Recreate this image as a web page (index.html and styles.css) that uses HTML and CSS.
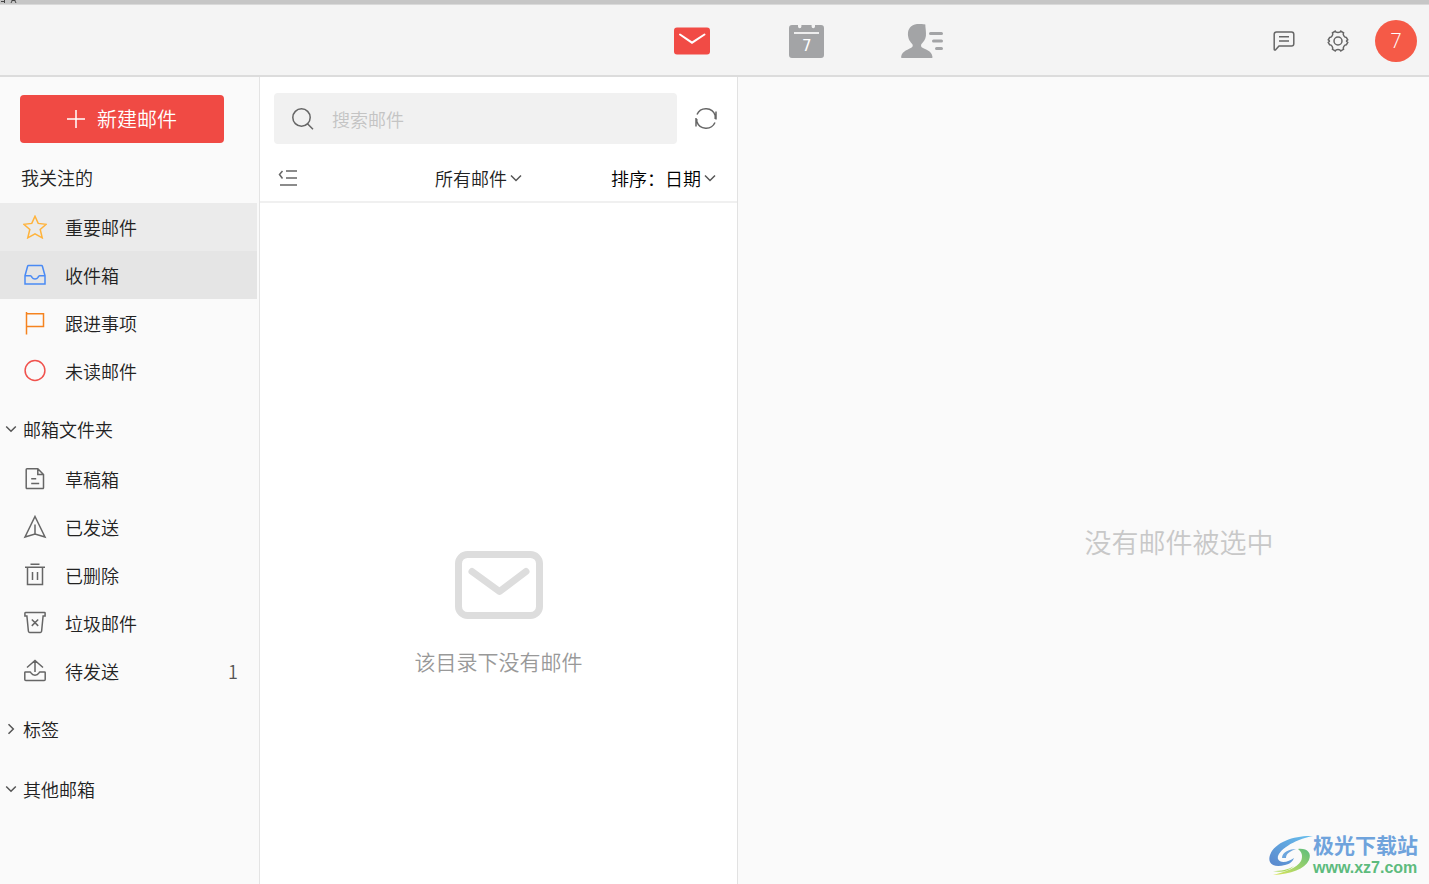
FILE: index.html
```html
<!DOCTYPE html>
<html lang="zh-CN">
<head>
<meta charset="utf-8">
<meta name="viewport" content="width=device-width, initial-scale=1">
<title>邮件</title>
<link rel="stylesheet" href="styles.css">
</head>
<body>
<div class="app">
  <div class="window-edge">
    <svg class="edge-marks" viewBox="0 0 20 3" aria-hidden="true"><path d="M1 1.500h3M4.500 0v3M11 3l1-2M15 1l1 2M11.500 .5h4"/></svg>
  </div>
  <header class="topbar">
    <nav class="modes" aria-label="主导航">
      <button class="mode" type="button" aria-label="邮件">
        <svg class="mode-mail" viewBox="0 0 36 28"><rect width="36" height="27" y=".5" rx="3" fill="#f14b45"/><path d="M6 7.500l12 8.200L30.500 7.500" fill="none" stroke="#fff" stroke-width="2" stroke-linecap="round"/></svg>
      </button>
      <button class="mode" type="button" aria-label="日历">
        <svg class="mode-calendar" viewBox="0 0 35 34"><path d="M3 1h6v1.500a1.700 1.700 0 0 0 3.400 0V1h10.200v1.500a1.700 1.700 0 0 0 3.400 0V1h6a3 3 0 0 1 3 3v27a3 3 0 0 1-3 3H3a3 3 0 0 1-3-3V4a3 3 0 0 1 3-3z" fill="#a3a4a6"/><path d="M5 9h25" stroke="#eee" stroke-width="2"/></svg>
        <span class="calendar-day">7</span>
      </button>
      <button class="mode" type="button" aria-label="联系人">
        <svg class="mode-contacts" viewBox="0 0 42 34"><path d="M16 0c3-.4 8 .2 8.500.8-.6 1.500.8 5 .4 11.200-.5 3.500-2.300 5.500-4.400 8-.7 1-.6 2.300.2 3.200C23.500 25.200 31 26.500 31.500 33c0 .7-.2 1-1 1H1c-.8 0-1-.4-.9-1 .8-6.500 8-7.500 10.900-9.800.9-.8 1-2.200.2-3.200C9.500 18 7.500 16 7 11.500 6.500 6 9 .8 16 0z" fill="#a3a4a6"/><path d="M29.500 9.500h11M32.500 17h8M35.500 24.500h5" stroke="#a3a4a6" stroke-width="3" stroke-linecap="round"/></svg>
      </button>
    </nav>
    <div class="actions">
      <button class="icon-button" type="button" aria-label="反馈">
        <svg class="line-icon" viewBox="0 0 22 22"><path d="M3.500 2h15a2.300 2.300 0 0 1 2.300 2.300v9.400a2.300 2.300 0 0 1-2.300 2.300H6L2.600 19.800c-.6.500-1.400.3-1.400-.6V4.300A2.300 2.300 0 0 1 3.500 2zM6 6.700h10M6 11h10"/></svg>
      </button>
      <button class="icon-button" type="button" aria-label="设置">
        <svg class="line-icon" viewBox="0 0 22 22"><path d="M8.200 1.200c.7 1.700 4.900 1.700 5.600 0l2.700 1.600c-1 1.800 1 4.900 2.900 4.800l1.300 2.200c-1.600 1-1.600 1.600 0 2.600l-1.300 2.400c-2-.1-3.800 2.600-2.900 4.500l-2.700 1.600c-.9-1.800-4.700-1.800-5.600 0l-2.700-1.600c.9-1.900-.9-4.600-2.900-4.500l-1.300-2.400c1.600-1 1.600-1.600 0-2.600l1.300-2.200c1.900.1 3.900-3 2.900-4.800z"/><circle cx="11" cy="11" r="4"/></svg>
      </button>
      <button class="avatar" type="button" aria-label="账户 7">7</button>
    </div>
  </header>

  <div class="workspace">
    <aside class="sidebar">
      <button class="compose" type="button">
        <svg class="compose-plus" viewBox="0 0 18 18" aria-hidden="true"><path d="M9 0v18M0 9h18"/></svg>
        新建邮件
      </button>
      <h2 class="group-title plain">我关注的</h2>
      <ul class="folders">
        <li><a class="folder hovered" href="#"><svg class="folder-icon star" viewBox="0 0 24 24"><path d="M12 1.300l3.200 7.100 8 .9-6 5.200 2 8.300L12 18.800l-7.200 4 2-8.300-6-5.200 8-.9z"/></svg>重要邮件</a></li>
        <li><a class="folder selected" href="#"><svg class="folder-icon inbox" viewBox="0 0 24 24"><path d="M5.500 2.500h13a1 1 0 0 1 .9.700l2.600 9.500v8.300H2v-8.300l2.600-9.500a1 1 0 0 1 .9-.7zM2 12.700h5.500c.8 0 1 .8 1.500 1.700 1.300 2.200 4.700 2.200 6 0 .5-.9.700-1.700 1.500-1.700H22"/></svg>收件箱</a></li>
        <li><a class="folder" href="#"><svg class="folder-icon flag" viewBox="0 0 24 24"><path d="M3.500 1v22.500M3.500 2.800h17v12.700h-17"/></svg>跟进事项</a></li>
        <li><a class="folder" href="#"><svg class="folder-icon unread" viewBox="0 0 24 24"><circle cx="12" cy="11.500" r="9.900"/></svg>未读邮件</a></li>
      </ul>

      <button class="group-title" type="button" aria-expanded="true"><svg class="chevron" viewBox="0 0 12 12"><path d="M1.200 3.500L6 8.300l4.800-4.800"/></svg>邮箱文件夹</button>
      <ul class="folders">
        <li><a class="folder" href="#"><svg class="folder-icon" viewBox="0 0 24 24"><path d="M4.500 1.800h10.300l5.700 5.700v13.300a.8.800 0 0 1-.8.800H4a.8.800 0 0 1-.8-.8V2.600a.8.800 0 0 1 .8-.8zM14.800 2v5.500h5.500M8.200 11.800h5M8.200 16.500h8"/></svg>草稿箱</a></li>
        <li><a class="folder" href="#"><svg class="folder-icon" viewBox="0 0 24 24"><path d="M12 1.500L22 22l-10-3L2 22zM12 9.500V19"/></svg>已发送</a></li>
        <li><a class="folder" href="#"><svg class="folder-icon" viewBox="0 0 24 24"><path d="M7.500 1.300h9M2 4.300h20M4.500 4.300v17.200h15V4.300M9.500 9v8M14.500 9v8"/></svg>已删除</a></li>
        <li><a class="folder" href="#"><svg class="folder-icon" viewBox="0 0 24 24"><path d="M2.500 1.500h19a.6.600 0 0 1 .6.600V5h-2l-1.500 15.300a1.200 1.200 0 0 1-1.200 1.100H6.600a1.200 1.200 0 0 1-1.200-1.100L3.900 5h-2V2.100a.6.600 0 0 1 .6-.6zM8.800 8.500l6.400 6.400M15.200 8.500l-6.400 6.400"/></svg>垃圾邮件</a></li>
        <li><a class="folder" href="#"><svg class="folder-icon" viewBox="0 0 24 24"><path d="M7 13H2.400a.6.600 0 0 0-.6.600v7a1 1 0 0 0 1 1h18.400a1 1 0 0 0 1-1v-7a.6.600 0 0 0-.6-.6H17c-.7 0-.9.600-1.200 1.200-1.500 2.700-6.100 2.700-7.600 0C7.900 13.600 7.700 13 7 13zM12 13V1.500M4 8.500l8-7 8 7"/></svg>待发送<span class="count">1</span></a></li>
      </ul>

      <button class="group-title" type="button" aria-expanded="false"><svg class="chevron" viewBox="0 0 12 12"><path d="M3.500 1.200L8.300 6l-4.800 4.800"/></svg>标签</button>
      <button class="group-title" type="button" aria-expanded="true"><svg class="chevron" viewBox="0 0 12 12"><path d="M1.200 3.500L6 8.300l4.800-4.800"/></svg>其他邮箱</button>
    </aside>

    <section class="mail-list">
      <div class="search-row">
        <label class="search">
          <svg class="line-icon" viewBox="0 0 22 22" aria-hidden="true"><circle cx="9.500" cy="9.500" r="8.700"/><path d="M15.500 15.800l5.500 5.500"/></svg>
          <input class="search-input" type="text" placeholder="搜索邮件" aria-label="搜索邮件">
        </label>
        <button class="icon-button" type="button" aria-label="刷新">
          <svg class="line-icon" viewBox="0 0 22 22"><path d="M2 6.500A9.800 9.800 0 0 1 20.200 7.500M20 14.500A9.800 9.800 0 0 1 1.800 13.500M21 3.500v8M20.200 7v4M1 10v8.500M1.800 11v4"/></svg>
        </button>
      </div>
      <div class="filters">
        <button class="icon-button collapse" type="button" aria-label="折叠列表"><svg class="line-icon small" viewBox="0 0 20 18"><path d="M4.500 2L1.500 5.500l3 4M8 2h11M8 9h11M2 16h17"/></svg></button>
        <button class="dropdown" type="button">所有邮件<svg class="chevron" viewBox="0 0 12 12"><path d="M1 3.500l5 5 5-5"/></svg></button>
        <button class="dropdown sort" type="button">排序：日期<svg class="chevron" viewBox="0 0 12 12"><path d="M1 3.500l5 5 5-5"/></svg></button>
      </div>
      <div class="empty">
        <svg class="empty-icon" viewBox="0 0 88 68" aria-hidden="true"><rect x="3.500" y="3.500" width="81" height="61" rx="9"/><path d="M17 20.500l27.500 20 26.500-20"/></svg>
        <p class="empty-text">该目录下没有邮件</p>
      </div>
    </section>

    <main class="reader">
      <p class="reader-text">没有邮件被选中</p>
    </main>
  </div>

  <div class="watermark">
    <svg class="watermark-logo" viewBox="0 0 44 42" aria-hidden="true">
      <defs>
        <linearGradient id="swoosh-blue" x1="0" y1="1" x2="1" y2="0"><stop offset="0" stop-color="#5a86cc"/><stop offset="1" stop-color="#67c0ee"/></linearGradient>
        <linearGradient id="swoosh-green" x1="0" y1="1" x2="1" y2="0"><stop offset="0" stop-color="#dde65a"/><stop offset="1" stop-color="#5cbd7c"/></linearGradient>
      </defs>
      <path d="M44 1C28 0 6 6 1 20c-3 9 4 13 15 10 5-1 8-4 9-7-5 4-14 6-16 1C7 17 23 5 44 1z" fill="url(#swoosh-blue)"/>
      <path d="M13 23c0-6 8-9 14-9-5 2-10 4-10 9z" fill="#6ba5dd"/>
      <path d="M29 14c9-1 14 4 11 11-4 9-18 14-36 15 12-3 24-7 28-14 2-5 1-9-3-12z" fill="url(#swoosh-green)"/>
      <path d="M4 36c8 0 15-1 21-5-5 5-13 7-21 5z" fill="#a9d85c"/>
    </svg>
    <div class="watermark-words">
      <span class="watermark-name">极光下载站</span>
      <span class="watermark-site">www.xz7.com</span>
    </div>
  </div>
</div>
</body>
</html>
```

FILE: styles.css
```css
* {
  box-sizing: border-box;
}

body {
  margin: 0;
  font-family: "Noto Sans CJK SC", "Noto Sans", sans-serif;
  font-size: 18px;
  font-weight: 350;
  line-height: 24px;
  color: #222;
  background: #fafafa;
}

button,
input {
  padding: 0;
  border: 0;
  background: none;
  font: inherit;
  color: inherit;
}

button {
  cursor: pointer;
}

svg {
  display: block;
  flex: none;
}

p,
h2,
ul {
  margin: 0;
  padding: 0;
}

.app {
  display: flex;
  flex-direction: column;
  min-height: 100vh;
}

.window-edge {
  height: 5px;
  background: #c6c6c6;
  border-bottom: 1px solid #d9d9d9;
}

.edge-marks {
  width: 20px;
  height: 3px;
  fill: none;
  stroke: #444;
}

/* Header */

.topbar {
  display: grid;
  grid-template-columns: 67fr auto 33fr auto;
  align-items: center;
  height: 72px;
  padding: 1px 12px 0 0;
  background: #f4f4f4;
  border-bottom: 2px solid #dcdcdc;
}

.modes {
  grid-column: 2;
  display: flex;
  align-items: center;
  gap: 73px;
}

.mode {
  display: grid;
  place-items: center;
  width: 42px;
  height: 34px;
}

.icon-button {
  display: block;
  flex: none;
}

.mode-mail {
  width: 36px;
  height: 28px;
}

.mode-calendar {
  grid-area: 1 / 1;
  width: 35px;
  height: 34px;
}

.calendar-day {
  grid-area: 1 / 1;
  padding-top: 10px;
  font-family: "DejaVu Sans", sans-serif;
  font-size: 15px;
  font-weight: 400;
  color: #fff;
}

.mode-contacts {
  width: 42px;
  height: 34px;
}

.actions {
  grid-column: 4;
  display: flex;
  align-items: center;
  gap: 32px;
}

.line-icon {
  width: 22px;
  height: 22px;
  fill: none;
  stroke: #666;
  stroke-width: 1.5;
}

.line-icon.small {
  width: 20px;
  height: 18px;
}

.avatar {
  width: 42px;
  height: 42px;
  margin-left: -6px;
  border-radius: 50%;
  background: #f55a47;
  color: #fff;
  font-family: "Open Sans", sans-serif;
  font-size: 20px;
}

/* Panes */

.workspace {
  display: grid;
  grid-template-columns: 260px 478px 1fr;
  flex: 1;
}

.sidebar {
  display: flex;
  flex-direction: column;
  padding: 18px 2px 0 0;
  border-right: 1px solid #e4e4e4;
}

.compose {
  display: flex;
  align-items: center;
  justify-content: center;
  gap: 12px;
  height: 48px;
  margin: 0 33px 10px 20px;
  border-radius: 4px;
  background: #f04a44;
  color: #fff;
  font-size: 20px;
}

.compose-plus {
  width: 18px;
  height: 18px;
  stroke: #fff;
  stroke-width: 1.5;
}

.group-title {
  display: flex;
  align-items: center;
  gap: 6px;
  height: 48px;
  margin: 10px 0 2px;
  padding-left: 5px;
  font-size: 18px;
  font-weight: 350;
  text-align: left;
}

.group-title.plain {
  margin-top: 0;
  padding-left: 21px;
}

.chevron {
  width: 12px;
  height: 12px;
  fill: none;
  stroke: #555;
  stroke-width: 1.5;
}

.folders {
  list-style: none;
}

.folder {
  display: flex;
  align-items: center;
  gap: 18px;
  height: 48px;
  padding: 0 19px 0 23px;
  color: inherit;
  text-decoration: none;
}

.folder.hovered {
  background: #ebebeb;
}

.folder.selected {
  background: #e5e5e5;
}

.folder-icon {
  width: 24px;
  height: 24px;
  fill: none;
  stroke: #666;
  stroke-width: 1.5;
}

.star {
  stroke: #ffb33b;
}

.inbox {
  stroke: #4a8af4;
}

.flag {
  stroke: #f5831f;
}

.unread {
  stroke: #f0524d;
}

.count {
  margin-left: auto;
  color: #555;
}

.mail-list {
  display: flex;
  flex-direction: column;
  background: #fff;
  border-right: 1px solid #e2e2e2;
}

.search-row {
  display: flex;
  align-items: center;
  gap: 18px;
  padding: 16px 20px 0 14px;
}

.search {
  display: flex;
  flex: 1;
  align-items: center;
  gap: 18px;
  height: 51px;
  padding: 0 18px;
  border-radius: 4px;
  background: #f1f1f1;
}

.search-input {
  flex: 1;
  min-width: 0;
  outline: none;
}

.search-input::placeholder {
  color: #c4c4c4;
  opacity: 1;
}

.filters {
  display: flex;
  align-items: center;
  height: 59px;
  padding: 10px 21px 0 18px;
  border-bottom: 2px solid #f0f0f0;
}

.collapse {
  margin-right: auto;
}

.dropdown {
  display: flex;
  align-items: center;
  gap: 3px;
}

.sort {
  margin-left: 89px;
  color: #000;
}

.empty {
  display: flex;
  flex-direction: column;
  align-items: center;
  gap: 26px;
  padding-top: 348px;
}

.empty-icon {
  width: 88px;
  height: 68px;
  fill: none;
  stroke: #ddd;
  stroke-width: 7;
  stroke-linecap: round;
  stroke-linejoin: round;
}

.empty-text {
  font-size: 21px;
  line-height: 32px;
  color: #999;
}

.reader {
  display: flex;
  align-items: center;
  justify-content: center;
  padding: 122px 0 0 191px;
}

.reader-text {
  font-size: 27px;
  line-height: 40px;
  color: #c8c8c8;
}

/* Site mark over the lower right corner */

.watermark {
  position: absolute;
  right: 11px;
  bottom: 6px;
  display: flex;
  align-items: center;
}

.watermark-logo {
  width: 44px;
  height: 42px;
}

.watermark-words {
  display: flex;
  flex-direction: column;
}

.watermark-name {
  font-family: "Liberation Sans", "Noto Sans CJK SC", sans-serif;
  font-size: 21px;
  font-weight: 700;
  line-height: 24px;
  color: #6fa3dc;
}

.watermark-site {
  font-family: "Liberation Sans", sans-serif;
  font-size: 16px;
  font-weight: 700;
  line-height: 20px;
  color: #5dbb7d;
}
```
